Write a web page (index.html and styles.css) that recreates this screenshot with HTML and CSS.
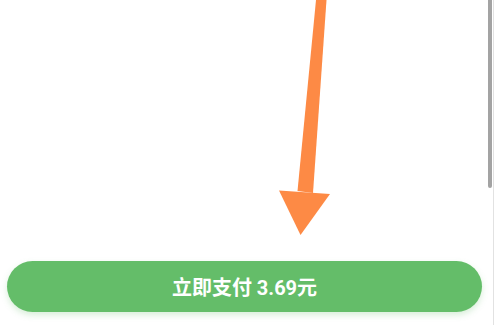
FILE: index.html
```html
<!DOCTYPE html>
<html lang="zh-CN">
<head>
<meta charset="utf-8">
<title>支付</title>
<link rel="stylesheet" href="styles.css">
</head>
<body>
<div class="page">
  <div class="content"></div>
  <div class="footer">
    <button class="pay-btn">立即支付 3.69元</button>
  </div>
</div>
<svg class="arrow" width="496" height="325" viewBox="0 0 496 325" aria-hidden="true">
  <polygon points="316,0 326.5,0 313,193 297.5,191" fill="#fd8a45"/>
  <polygon points="279,190.5 330,194 300.5,235" fill="#fd8a45"/>
</svg>
<div class="scrollbar">
  <div class="thumb"></div>
</div>
</body>
</html>
```
FILE: styles.css
```css
html, body {
  margin: 0;
  padding: 0;
  background: #ffffff;
}
body {
  width: 496px;
  height: 325px;
  overflow: hidden;
  position: relative;
  font-family: Roboto, "Noto Sans CJK SC", sans-serif;
}
.page {
  height: 325px;
  display: flex;
  flex-direction: column;
}
.content {
  flex: 1;
}
.footer {
  padding: 0 14px 13px 7px;
}
.pay-btn {
  display: block;
  width: 100%;
  height: 51px;
  border: none;
  border-radius: 26px;
  background: #64bd69;
  color: #ffffff;
  font-family: Roboto, "Noto Sans CJK SC", sans-serif;
  font-size: 20px;
  font-weight: 700;
  letter-spacing: 0;
  box-shadow: 0 3px 6px rgba(100, 189, 105, 0.25);
  padding: 0;
}
.arrow {
  position: absolute;
  left: 0;
  top: 0;
}
.scrollbar {
  position: absolute;
  top: 0;
  right: 2px;
  width: 1px;
  height: 325px;
  background: #e2e2e2;
}
.thumb {
  position: absolute;
  top: 0;
  right: 2px;
  width: 4px;
  height: 188px;
  background: #a3a3a3;
  border-radius: 0 0 2px 2px;
}
```
